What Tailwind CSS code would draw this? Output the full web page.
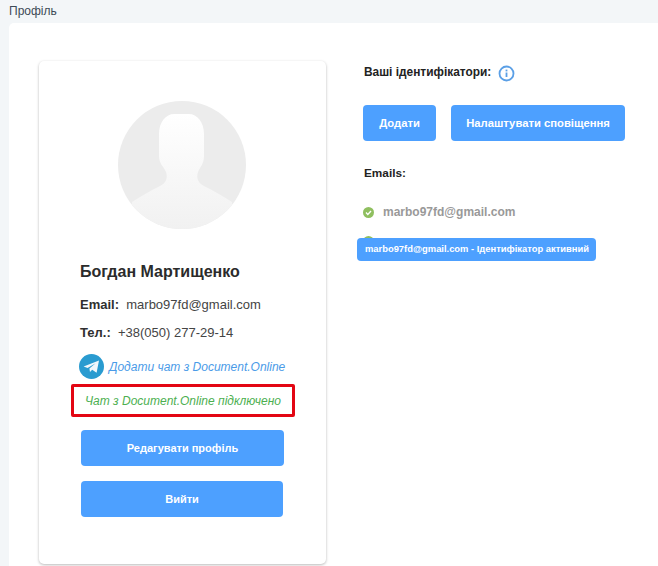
<!DOCTYPE html>
<html lang="uk">
<head>
    <meta charset="UTF-8">
    <title>Профіль</title>
    <script src="https://cdn.jsdelivr.net/npm/@tailwindcss/browser@4"></script>
</head>
<body class="h-[566px] overflow-hidden bg-[#f3f6f8] font-['Liberation_Sans',Arial,sans-serif]">
<!-- Шапка -->
<div class="h-[23px] pl-[9px] pt-[4px] text-[12px] leading-[15px] text-[#3d4a57]">Профіль</div>

<div class="ml-[9px] h-[543px] rounded-tl-[5px] bg-white flex items-start">
    <!-- Картка профілю -->
    <div class="ml-[30px] mt-[38px] w-[287px] h-[503px] shrink-0 rounded-[5px] bg-white shadow-[0_1px_3px_rgba(0,0,0,0.28)] flex flex-col">
        <svg class="mt-[40px] ml-[79px] w-[128px] h-[128px]" viewBox="0 0 128 128">
            <defs>
                <linearGradient id="avatarFill" x1="0" y1="0" x2="0" y2="1">
                    <stop offset="0" stop-color="#ffffff"/>
                    <stop offset="1" stop-color="#f1f1f1"/>
                </linearGradient>
                <clipPath id="avatarClip"><circle cx="64" cy="64" r="64"/></clipPath>
            </defs>
            <circle cx="64" cy="64" r="64" fill="#ececec"/>
            <path clip-path="url(#avatarClip)" fill="url(#avatarFill)" d="M41 33C41 21 48 13 56 13H71C79 13 86 21 86 33V55C86 63 82 66 80 71C78 77 80 82 86 85C96 90 105 95 114 101V128H14V101C23 95 32 90 42 85C48 82 50 77 48 71C46 66 41 63 41 55Z"/>
        </svg>

        <div class="mt-[33px] ml-[41px] text-[16px] leading-[20px] font-bold text-[#2b2b2b]">Богдан Мартищенко</div>
        <div class="mt-[14px] ml-[41px] text-[13px] leading-[18px] text-[#444]"><span class="font-bold text-[#2f2f2f]">Email:</span>&nbsp; marbo97fd@gmail.com</div>
        <div class="mt-[10px] ml-[41px] text-[13px] leading-[18px] text-[#444]"><span class="font-bold text-[#2f2f2f]">Тел.:</span>&nbsp; +38(050) 277-29-14</div>

        <div class="mt-[12px] ml-[40px] flex items-center gap-[5px]">
            <svg class="w-[25px] h-[25px]" viewBox="0 0 25 25">
                <circle cx="12.5" cy="12.5" r="12.5" fill="#2a9bd0"/>
                <path fill="#f2f7fb" d="M4.6 12.6L20 6.4L17.6 18.8L13.2 15.8L11 18L10.4 14.6L16.6 9.2L8.6 14Z"/>
            </svg>
            <span class="text-[12px] leading-[16px] italic text-[#4a9be8]">Додати чат з Document.Online</span>
        </div>

        <div class="mt-[5px] ml-[32px] w-[224px] h-[33px] border-[3px] border-[#e30613] rounded-[2px] flex items-center justify-center text-[12px] italic text-[#4caf50]">Чат з Document.Online підключено</div>

        <button class="mt-[13px] ml-[42px] w-[203px] h-[36px] rounded-[4px] bg-[#4da0ff] text-[11px] font-bold text-white">Редагувати профіль</button>
        <button class="mt-[15px] ml-[42px] w-[202px] h-[36px] rounded-[4px] bg-[#4da0ff] text-[11px] font-bold text-white">Вийти</button>
    </div>

    <!-- Ідентифікатори -->
    <div class="relative ml-[37px] mt-[38px] flex-1">
        <div class="mt-[2px] ml-[1px] flex items-center gap-[7px] h-[20px] text-[11.9px] font-bold text-[#222]">
            <span>Ваші ідентифікатори:</span>
            <svg class="w-[17px] h-[17px]" viewBox="0 0 17 17" fill="none">
                <circle cx="8.5" cy="8.5" r="7" stroke="#5a9fe6" stroke-width="1.8"/>
                <rect x="7.6" y="7.5" width="1.8" height="4.5" fill="#5a9fe6"/>
                <rect x="7.6" y="4.6" width="1.8" height="1.8" fill="#5a9fe6"/>
            </svg>
        </div>
        <div class="mt-[22px] flex gap-[15px]">
            <button class="w-[73px] h-[36px] rounded-[4px] bg-[#4da0ff] text-[11.25px] font-bold text-white">Додати</button>
            <button class="w-[174px] h-[36px] rounded-[4px] bg-[#4da0ff] text-[11.25px] font-bold text-white">Налаштувати сповіщення</button>
        </div>
        <div class="mt-[25px] ml-[1px] text-[11.8px] leading-[14px] font-bold text-[#222]">Emails:</div>
        <div class="mt-[25px] flex items-center gap-[9px] h-[14px]">
            <svg class="w-[11px] h-[11px]" viewBox="0 0 11 11">
                <circle cx="5.5" cy="5.5" r="5.5" fill="#8fbf5f"/>
                <path d="M3 5.6L4.8 7.4L8 4" fill="none" stroke="#ffffff" stroke-width="1.4"/>
            </svg>
            <span class="text-[12px] font-bold text-[#999]">marbo97fd@gmail.com</span>
        </div>
        <div class="mt-[17px] flex h-[14px]">
            <span class="w-[11px] h-[11px] rounded-full bg-[#8fbf5f]"></span>
        </div>
        <!-- Підказка -->
        <div class="absolute left-[-6px] top-[177px] w-[239px] h-[23px] rounded-[4px] bg-[#4da0ff] flex items-center pl-[8px] text-[9.4px] font-bold text-white whitespace-nowrap">marbo97fd@gmail.com - Ідентифікатор активний</div>
    </div>
</div>
</body>
</html>
